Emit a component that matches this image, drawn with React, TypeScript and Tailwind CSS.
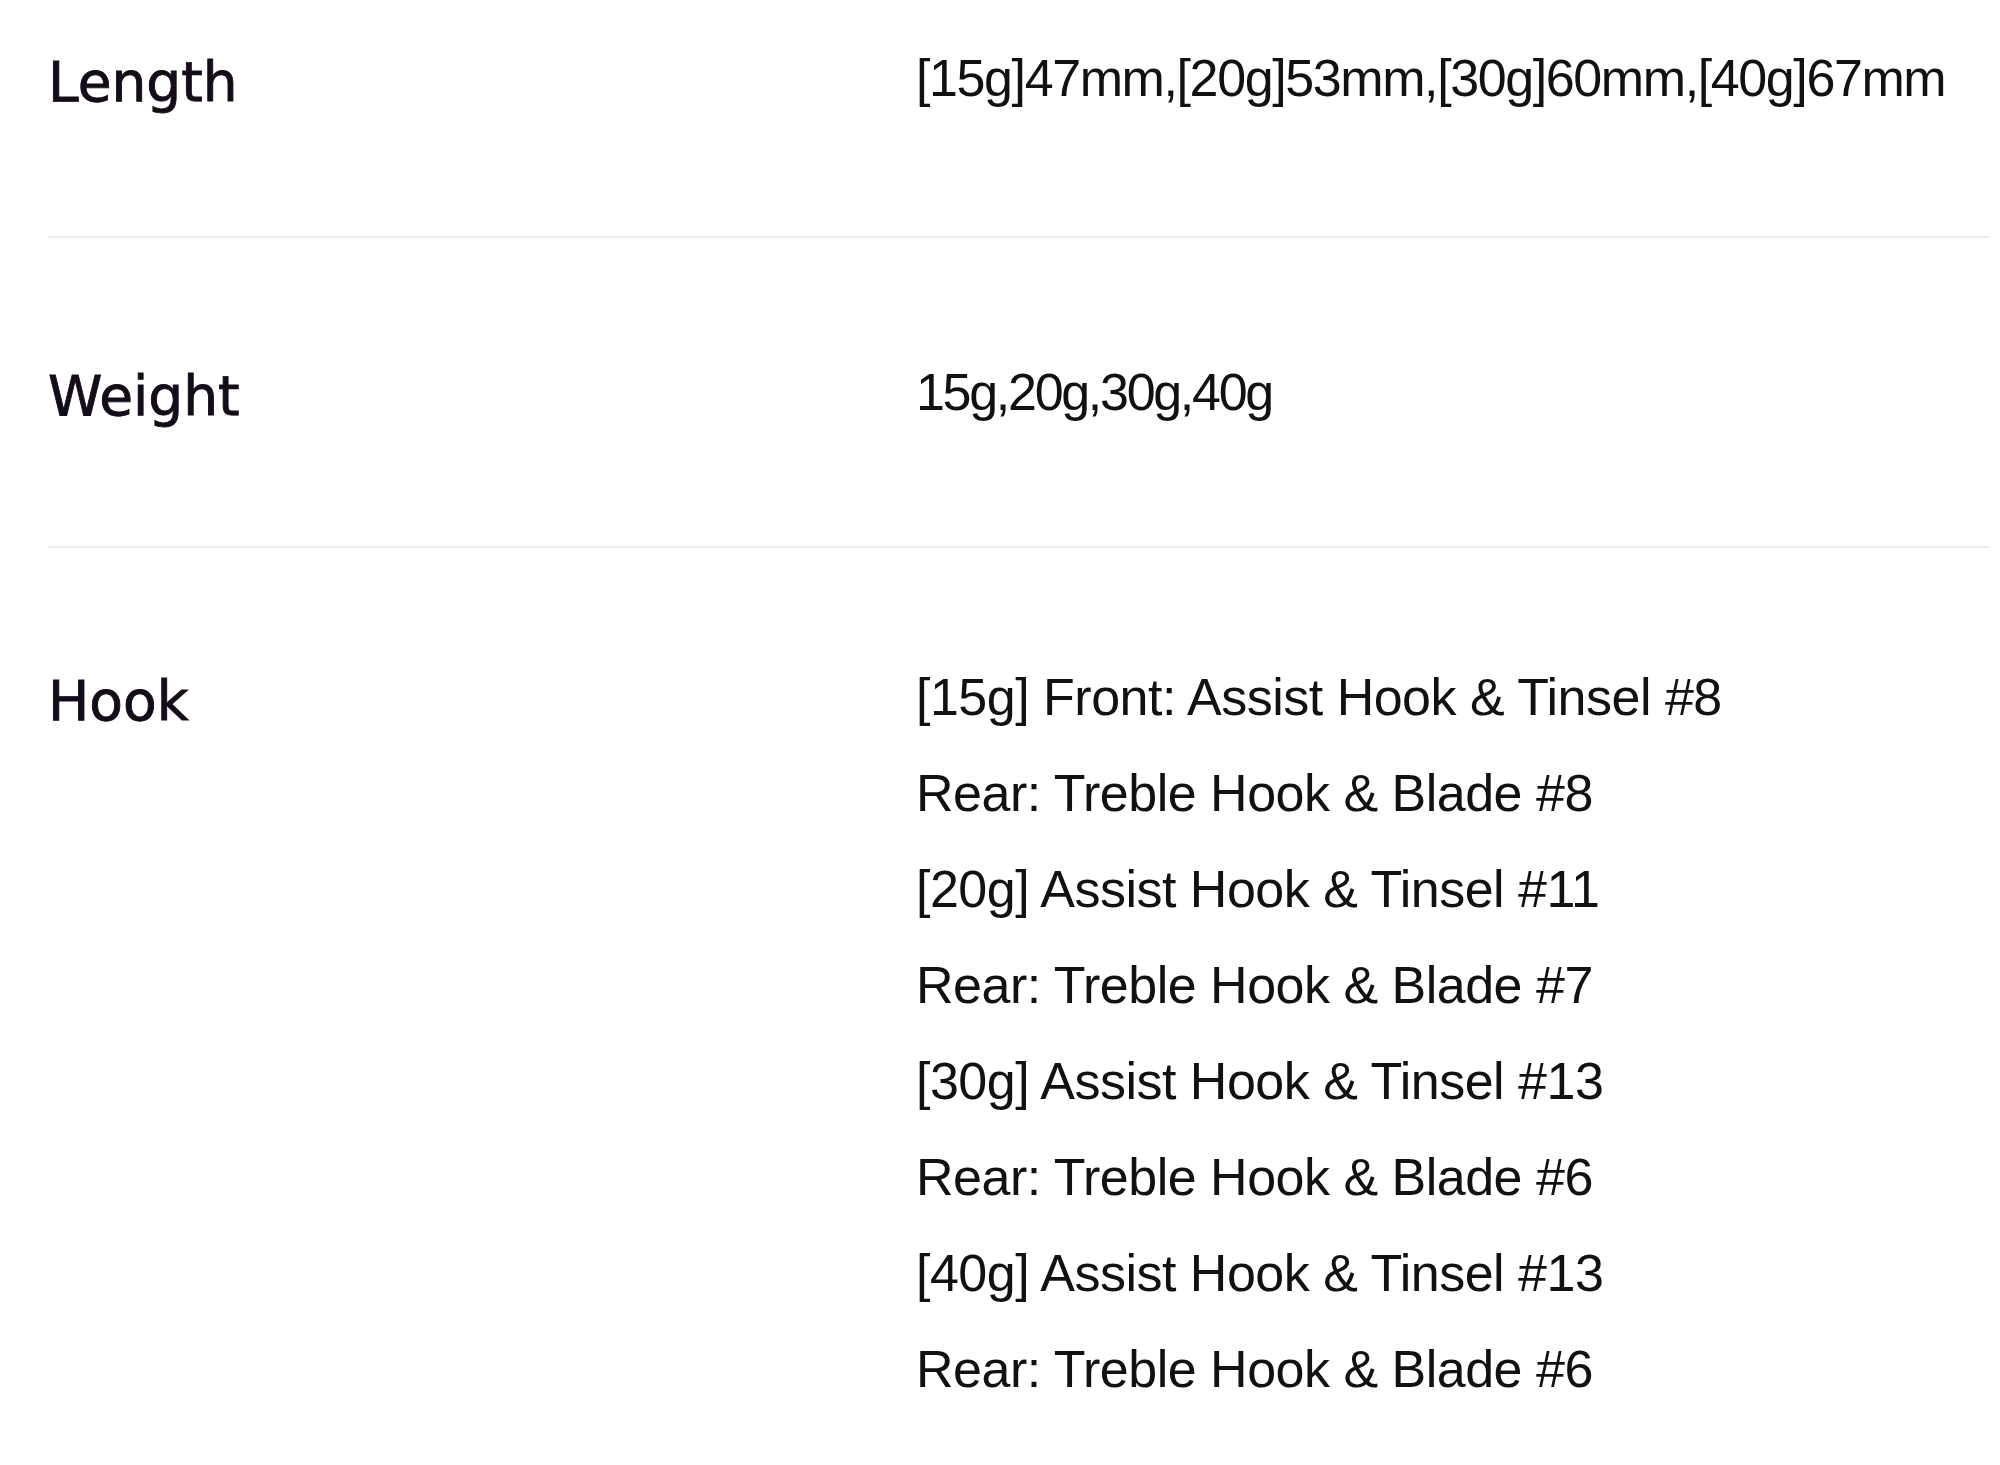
import React from "react";

const rows = [
  {
    label: "Length",
    values: ["[15g]47mm,[20g]53mm,[30g]60mm,[40g]67mm"],
    cls: "pt-[30px] pb-[110px]",
    track: "tracking-[-1.4px]",
  },
  {
    label: "Weight",
    values: ["15g,20g,30g,40g"],
    cls: "pt-[106px] pb-[106px]",
    track: "tracking-[-2.3px]",
  },
  {
    label: "Hook",
    values: [
      "[15g] Front: Assist Hook & Tinsel #8",
      "Rear: Treble Hook & Blade #8",
      "[20g] Assist Hook & Tinsel #11",
      "Rear: Treble Hook & Blade #7",
      "[30g] Assist Hook & Tinsel #13",
      "Rear: Treble Hook & Blade #6",
      "[40g] Assist Hook & Tinsel #13",
      "Rear: Treble Hook & Blade #6",
    ],
    cls: "pt-[101px] pb-[40px]",
    track: "tracking-[-0.5px]",
  },
];

export default function App() {
  return (
    <div className="w-[2000px] h-[1465px] bg-white overflow-hidden">
      <div className="ml-[48px] w-[1942px]">
        {rows.map((r, i) => (
          <div
            key={r.label}
            className={`flex items-start ${r.cls} ${i < rows.length - 1 ? "border-b-2 border-[#ececec]" : ""}`}
          >
            <div className="w-[868px] shrink-0 pt-[8px] text-[55px] leading-[88px] text-[#140c18] [-webkit-text-stroke:0.9px_#140c18] font-['DejaVu_Sans',sans-serif]">
              {r.label}
            </div>
            <div className={`flex flex-col text-[52px] leading-[96px] ${r.track} text-[#111] font-['Liberation_Sans',Arial,sans-serif]`}>
              {r.values.map((v, j) => (
                <div key={j} className="whitespace-nowrap">
                  {v}
                </div>
              ))}
            </div>
          </div>
        ))}
      </div>
    </div>
  );
}
